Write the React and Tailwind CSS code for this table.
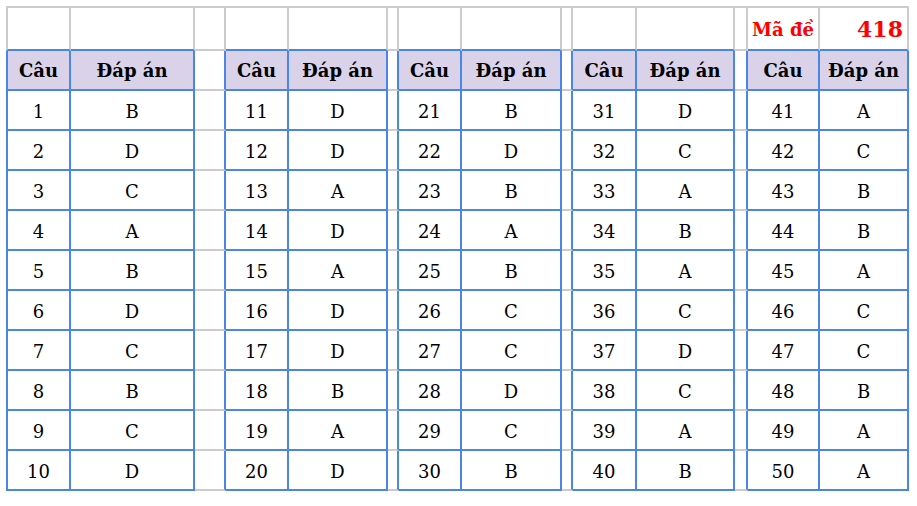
import React from "react";

const tables = [
  ["B", "D", "C", "A", "B", "D", "C", "B", "C", "D"],
  ["D", "D", "A", "D", "A", "D", "D", "B", "A", "D"],
  ["B", "D", "B", "A", "B", "C", "C", "D", "C", "B"],
  ["D", "C", "A", "B", "A", "C", "D", "C", "A", "B"],
  ["A", "C", "B", "B", "A", "C", "C", "B", "A", "A"],
];

// column kinds: q = Câu, a = Đáp án, s = spacer
const cols = [
  { k: "q", t: 0 },
  { k: "a", t: 0 },
  { k: "s" },
  { k: "q", t: 1 },
  { k: "a", t: 1 },
  { k: "s" },
  { k: "q", t: 2 },
  { k: "a", t: 2 },
  { k: "s" },
  { k: "q", t: 3 },
  { k: "a", t: 3 },
  { k: "s" },
  { k: "q", t: 4 },
  { k: "a", t: 4 },
];

function Cell({ r, c }) {
  const col = cols[c];
  const isSpacer = col.k === "s";
  const cls = ["flex", "border-r-2", "border-b-2", "border-solid"];
  if (r === 0) {
    cls.push("border-t-2", "border-t-[#cccccc]", "border-r-[#cccccc]");
    cls.push(isSpacer ? "border-b-[#cccccc]" : "border-b-[#4a86e8]");
    if (c === 0) cls.push("border-l-2", "border-l-[#cccccc]");
  } else {
    cls.push("border-r-[#4a86e8]");
    cls.push(isSpacer ? "border-b-[#cccccc]" : "border-b-[#4a86e8]");
    if (c === 0) cls.push("border-l-2", "border-l-[#4a86e8]");
  }
  let content = null;
  if (r === 0) {
    if (c === 12) {
      cls.push("items-end", "justify-center", "pb-[10px]");
      content = (
        <span className="text-[18px] font-bold text-[#ff0000] leading-none">Mã đề</span>
      );
    } else if (c === 13) {
      cls.push("items-end", "justify-end", "pr-[4px]", "pb-[9px]");
      content = (
        <span className="text-[22px] font-bold text-[#ff0000] leading-none">418</span>
      );
    }
  } else if (r === 1) {
    if (!isSpacer) {
      cls.push("bg-[#d9d2e9]", "items-center", "justify-center", "pt-[2px]");
      content = (
        <span className="text-[18px] font-bold text-black leading-none">
          {col.k === "q" ? "Câu" : "Đáp án"}
        </span>
      );
    }
  } else if (!isSpacer) {
    cls.push("items-center", "justify-center", "pt-[3px]");
    const i = r - 2;
    content = (
      <span className="text-[18px] text-black leading-none">
        {col.k === "q" ? col.t * 10 + i + 1 : tables[col.t][i]}
      </span>
    );
  }
  return <div className={cls.join(" ")}>{content}</div>;
}

export default function App() {
  const rows = Array.from({ length: 12 }, (_, r) => r);
  return (
    <div className="w-[917px] h-[506px] bg-white font-['DejaVu_Serif',serif] overflow-hidden">
      <div className="ml-[6px] mt-[6px] grid grid-cols-[65px_124px_31px_63px_99px_11px_63px_100px_11px_64px_98px_13px_72px_89px] grid-rows-[45px_repeat(11,40px)] w-[903px]">
        {rows.map((r) => cols.map((_, c) => <Cell key={r + "-" + c} r={r} c={c} />))}
      </div>
    </div>
  );
}
